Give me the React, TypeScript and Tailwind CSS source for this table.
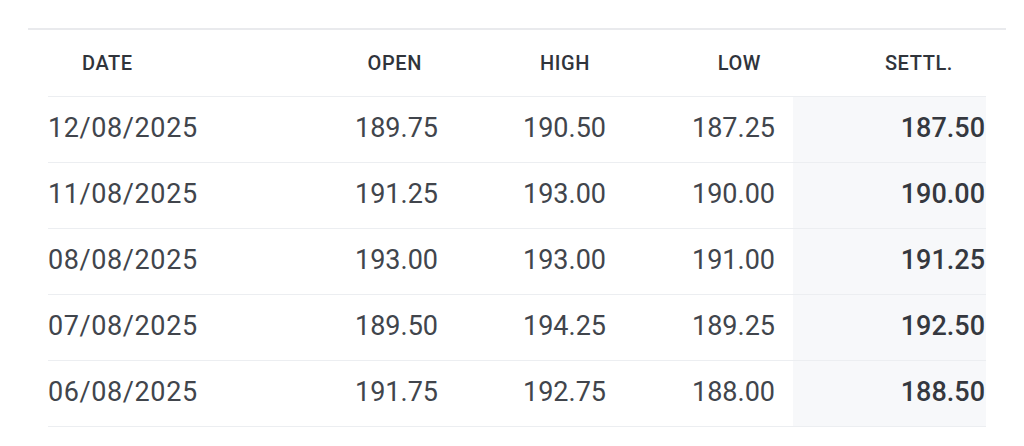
type Row = {
  date: string;
  open: string;
  high: string;
  low: string;
  settle: string;
};

const rows: Row[] = [
  { date: '12/08/2025', open: '189.75', high: '190.50', low: '187.25', settle: '187.50' },
  { date: '11/08/2025', open: '191.25', high: '193.00', low: '190.00', settle: '190.00' },
  { date: '08/08/2025', open: '193.00', high: '193.00', low: '191.00', settle: '191.25' },
  { date: '07/08/2025', open: '189.50', high: '194.25', low: '189.25', settle: '192.50' },
  { date: '06/08/2025', open: '191.75', high: '192.75', low: '188.00', settle: '188.50' },
];

const cols = 'grid grid-cols-[230px_172px_168px_175px_1fr]';

export default function App() {
  return (
    <div className="min-h-[446px] w-[1024px] bg-white pt-[28px] font-['Roboto',sans-serif]">
      <div className="ml-[28px] w-[978px] border-t-2 border-[#e9eaed]">
        <div className="px-[20px]">
          {/* header */}
          <div className={`${cols} h-[66px] items-center text-[20px] font-medium uppercase tracking-[0.6px] text-[#30343b]`}>
            <div className="pl-[34px]">Date</div>
            <div className="pr-[28px] text-right">Open</div>
            <div className="pr-[28px] text-right">High</div>
            <div className="pr-[32px] text-right">Low</div>
            <div className="pr-[33px] text-right">Settl.</div>
          </div>

          {/* body */}
          <div className="border-t border-[#eceef1]">
            {rows.map((r) => (
              <div
                key={r.date}
                className={`${cols} h-[66px] border-b border-[#eceef1] text-[27px] leading-none text-[#41454c]`}
              >
                <div className="flex items-center pb-[3px] tracking-[0.6px]">{r.date}</div>
                <div className="flex items-center justify-end pb-[3px] pr-[12px]">{r.open}</div>
                <div className="flex items-center justify-end pb-[3px] pr-[12px]">{r.high}</div>
                <div className="flex items-center justify-end pb-[3px] pr-[18px]">{r.low}</div>
                <div className="flex items-center justify-end bg-[#f7f8fa] pb-[3px] pr-[1px] font-medium text-[#35383f]">
                  {r.settle}
                </div>
              </div>
            ))}
          </div>
        </div>
      </div>
    </div>
  );
}
